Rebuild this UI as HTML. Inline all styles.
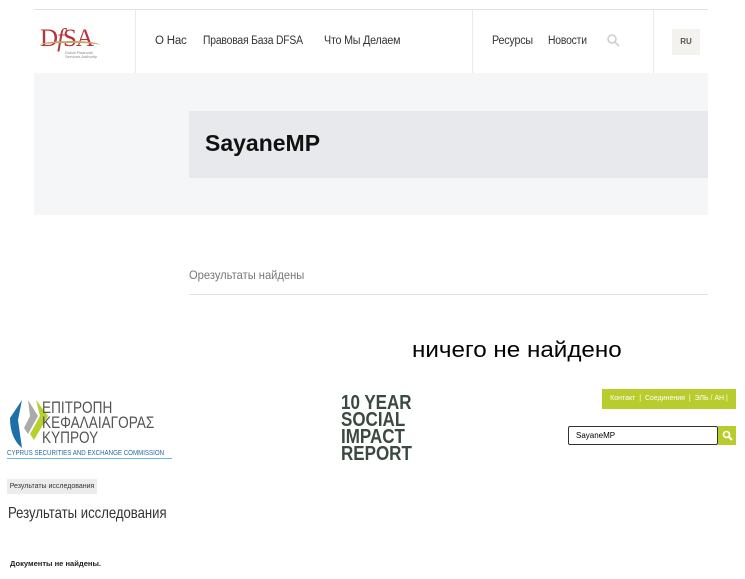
<!DOCTYPE html>
<html><head><meta charset="utf-8"><style>
body{margin:0;width:745px;height:579px;background:#fff;font-family:"Liberation Sans",sans-serif;position:relative;overflow:hidden}
.a{position:absolute;white-space:nowrap}
.n{font-size:11.5px;color:#333;top:35px;letter-spacing:-0.2px}
</style></head><body>
<div class="a" style="left:34px;top:9px;width:674px;height:1px;background:#e3e3e3"></div>
<div class="a" style="left:135px;top:10px;width:1px;height:63px;background:#eaeaea"></div>
<div class="a" style="left:472px;top:10px;width:1px;height:63px;background:#eaeaea"></div>
<div class="a" style="left:653px;top:10px;width:1px;height:63px;background:#eaeaea"></div>
<div class="a" style="left:40px;top:25px;color:#b8333a;font-family:'Liberation Serif',serif;font-size:25px;letter-spacing:-1px">D<i>f</i>SA</div>
<div class="a" style="left:40px;top:41px;width:60px;height:6px;border-top:2px solid #c7a66a;border-radius:50%"></div>
<div class="a" style="left:65px;top:51px;font-size:4px;color:#888;line-height:4px">Dubai Financial<br>Services Authority</div>
<div class="a n" style="left:155px">О Нас</div>
<div class="a n" style="left:203px;transform:scaleX(0.9);transform-origin:left">Правовая База DFSA</div>
<div class="a n" style="left:324px;transform:scaleX(0.93);transform-origin:left">Что Мы Делаем</div>
<div class="a n" style="left:492px;transform:scaleX(0.93);transform-origin:left">Ресурсы</div>
<div class="a n" style="left:548px;transform:scaleX(0.9);transform-origin:left">Новости</div>
<svg class="a" style="left:607px;top:34px" width="13" height="13"><circle cx="5" cy="5" r="4" fill="none" stroke="#ccc" stroke-width="1.5"/><path d="M8 8L12 12" stroke="#ccc" stroke-width="1.5"/></svg>
<div class="a" style="left:672px;top:29px;width:28px;height:26px;background:#f3f2ee;font-size:8px;font-weight:bold;color:#555;text-align:center;line-height:26px">RU</div>
<div class="a" style="left:34px;top:73px;width:674px;height:142px;background:#f5f6f8"></div>
<div class="a" style="left:189px;top:111px;width:519px;height:67px;background:#e8e9ec"></div>
<div class="a" style="left:205px;top:130px;font-size:23px;font-weight:bold;color:#111">SayaneMP</div>
<div class="a" style="left:189px;top:268px;font-size:12px;color:#777;transform:scaleX(0.93);transform-origin:left">Орезультаты найдены</div>
<div class="a" style="left:189px;top:294px;width:519px;height:1px;background:#e3e3e3"></div>
<div class="a" style="left:412px;top:337px;font-size:22px;color:#000;transform:scaleX(1.1);transform-origin:left">ничего не найдено</div>
<svg class="a" style="left:8px;top:398px" width="42" height="58"><path d="M14 2L2 20Q2 40 14 50L10 22Z" fill="#1d6fa8"/><path d="M20 2L30 18L20 36L16 30L22 18Z" fill="#aaa"/><path d="M28 2L40 18L26 42L22 36L32 18Z" fill="#b9cf2e"/></svg>
<div class="a" style="left:42px;top:400px;font-size:17px;color:#555;line-height:15px;transform:scaleX(0.8);transform-origin:left">ΕΠΙΤΡΟΠΗ<br>ΚΕΦΑΛΑΙΑΓΟΡΑΣ<br>ΚΥΠΡΟΥ</div>
<div class="a" style="left:7px;top:450px;font-size:7px;color:#2a6aa0;transform:scaleX(0.88);transform-origin:left">CYPRUS SECURITIES AND EXCHANGE COMMISSION</div>
<div class="a" style="left:7px;top:458px;width:165px;height:1px;background:#6bb8e0"></div>
<div class="a" style="left:341px;top:395px;font-size:20px;font-weight:900;line-height:17px;color:#3a4a40;transform:scaleX(0.85);transform-origin:left">10 YEAR<br>SOCIAL<br>IMPACT<br>REPORT</div>
<div class="a" style="left:602px;top:389px;width:134px;height:20px;background:#b8cd2d;color:#fff;font-size:7px;line-height:20px;text-align:center">Контакт &nbsp;| &nbsp;Соединения &nbsp;| &nbsp;ЭЛЬ / АН |</div>
<div class="a" style="left:568px;top:426px;border:1px solid #333;border-radius:2px;font-size:8px;line-height:17px;padding-left:7px;box-sizing:border-box;width:150px;height:19px">SayaneMP</div>
<div class="a" style="left:718px;top:426px;width:18px;height:19px;background:#b8cd2d"></div>
<svg class="a" style="left:722px;top:430px" width="11" height="11"><circle cx="4.5" cy="4.5" r="3" fill="none" stroke="#fff" stroke-width="1.6"/><path d="M7 7L10 10" stroke="#fff" stroke-width="2"/></svg>
<div class="a" style="left:7px;top:479px;width:90px;height:15px;background:#ececec;font-size:7px;line-height:15px;text-align:center;color:#333">Результаты исследования</div>
<div class="a" style="left:8px;top:505px;font-size:16px;color:#333;transform:scaleX(0.82);transform-origin:left">Результаты исследования</div>
<div class="a" style="left:10px;top:561px;font-size:7px;font-weight:bold;color:#222;transform:scaleX(1.08);transform-origin:left">Документы не найдены.</div>
</body></html>
